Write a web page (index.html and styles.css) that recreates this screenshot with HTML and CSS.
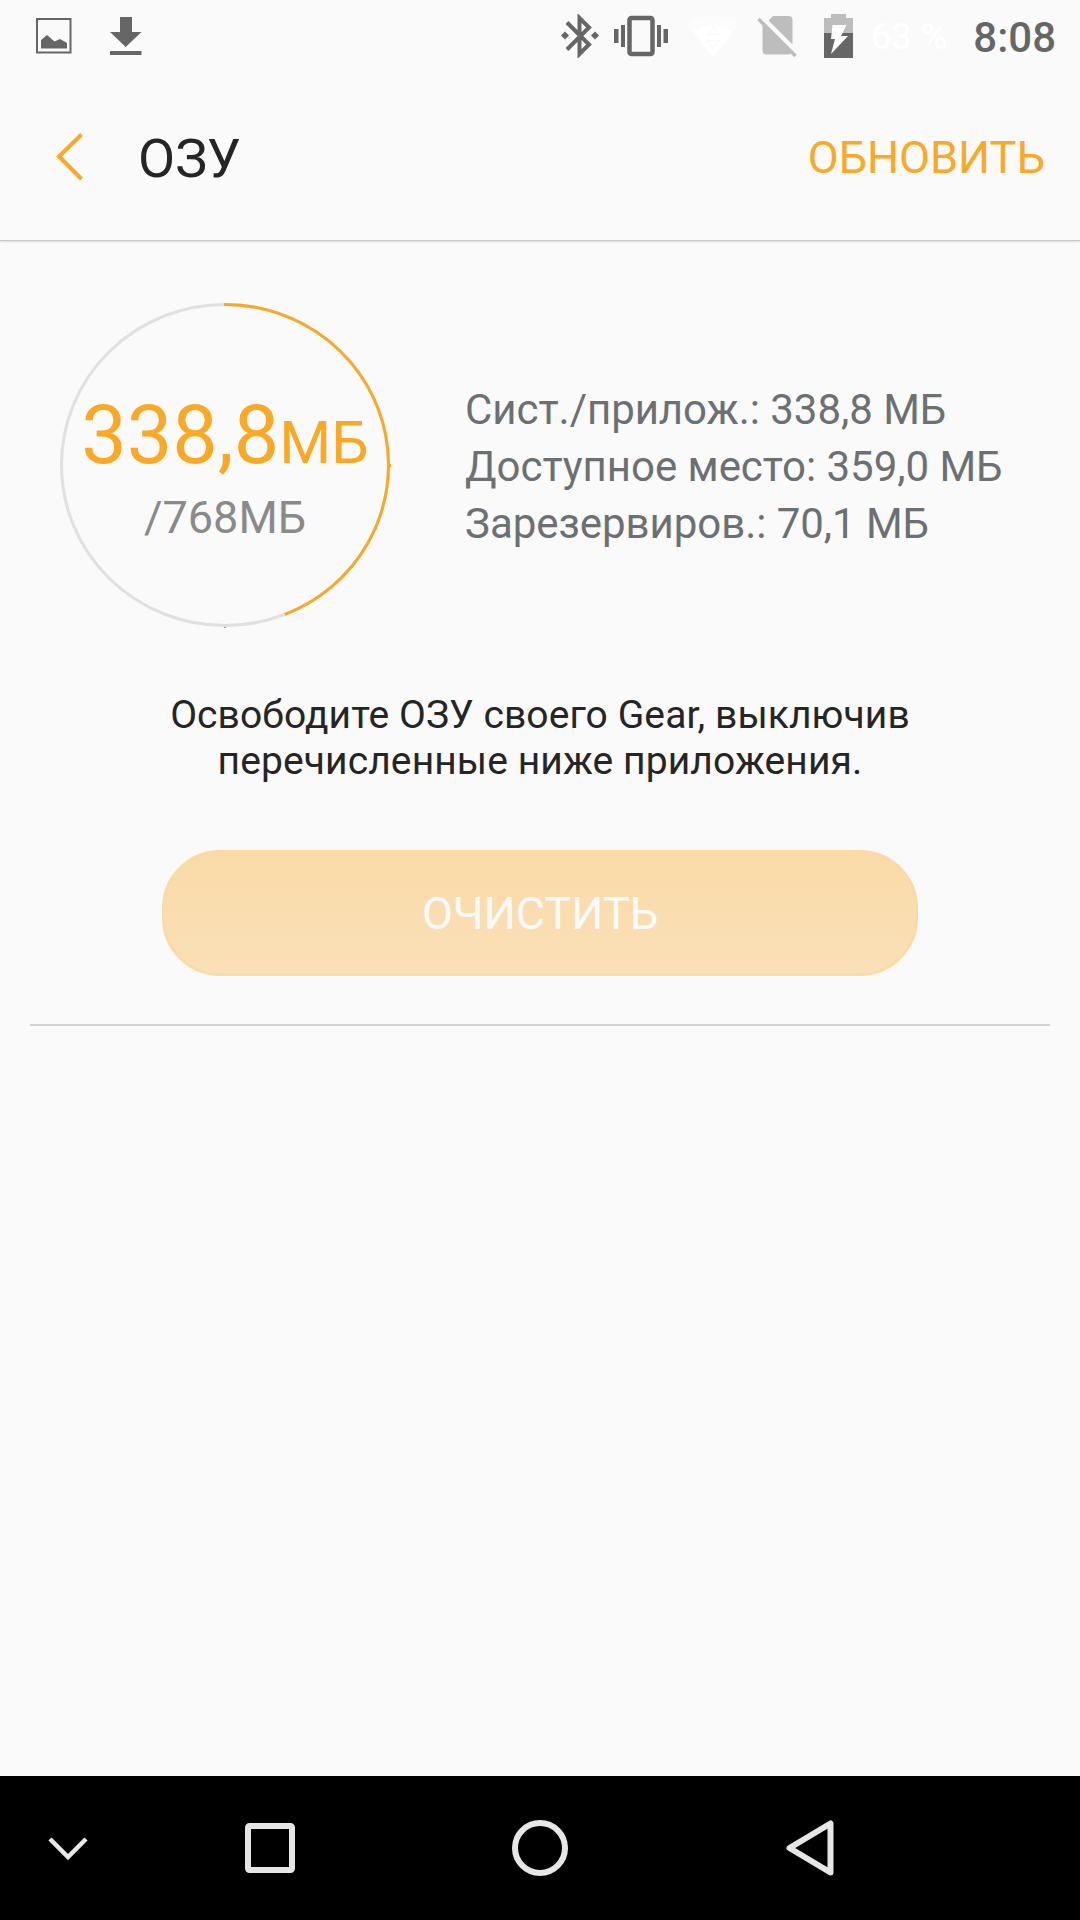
FILE: index.html
```
<!DOCTYPE html>
<html lang="ru">
<head>
    <meta charset="UTF-8">
    <meta name="viewport" content="width=device-width, initial-scale=1.0">
    <title>ОЗУ</title>
    <link rel="stylesheet" href="styles.css">
</head>
<body>
    <div class="screen">
        <div class="status-bar">
            <div class="status-left">
                <!-- screenshot -->
                <svg width="36" height="36" viewBox="0 0 36 36">
                    <rect x="1" y="1" width="33.5" height="33.5" fill="none" stroke="#666" stroke-width="2"/>
                    <path d="M5 30.500V22l6-5 7.500 6.500L24 21l7 4v5.500z" fill="#666"/>
                </svg>
                <!-- download -->
                <svg width="32" height="38" viewBox="0 0 32 38" fill="#666">
                    <path d="M10 0h12v15h9.500L15.700 30 0 15h10zM0 34h31.500v4H0z"/>
                </svg>
            </div>
            <div class="status-right">
                <!-- bluetooth -->
                <svg class="bt" width="39" height="44" viewBox="0 0 39 44">
                    <path d="M6 8.500L28 30.500 18.500 40V4L28 13.500 6 35.500" fill="none" stroke="#666" stroke-width="4"/>
                    <path d="M4 17.500l4 4-4 4-4-4zM34 17.500l4 4-4 4-4-4z" fill="#666"/>
                </svg>
                <!-- vibrate -->
                <svg class="vibrate" width="54" height="42" viewBox="0 0 54 42">
                    <rect x="15.500" y="3" width="23" height="36" rx="2" fill="none" stroke="#666" stroke-width="4.500"/>
                    <path d="M0 14h4.500v14H0zM7 10h4v22H7zM43 10h4v22h-4zM49.500 14H54v14h-4.500z" fill="#666"/>
                </svg>
                <!-- wifi -->
                <svg class="wifi" width="54" height="42" viewBox="0 0 54 42">
                    <path d="M0 9Q27-8 54 9L27 42z" fill="#fcfcfc"/>
                    <path d="M7 17Q27 4 47 17L27 42z" fill="#fff"/>
                    <path d="M27 11l5.500 8h-11zM27 34l-6-8.500h12z" fill="none" stroke="#fafafa" stroke-width="1.500"/>
                </svg>
                <!-- no sim -->
                <svg class="sim" width="40" height="43" viewBox="0 0 40 43">
                    <path d="M11.500 5.500L16 1h15.500q4 0 4 4v24.500zM5.500 9.500L34 38q-.5 1.500-3 1.500H9.500q-4 0-4-4z" fill="#bdbdbd"/>
                    <path d="M1.500 4L38.500 41" stroke="#bdbdbd" stroke-width="3.500"/>
                </svg>
                <!-- battery -->
                <svg class="battery" width="29" height="44" viewBox="0 0 29 44">
                    <path d="M0 19V4h7V0h15v4h7v15z" fill="#bdbdbd"/>
                    <path d="M0 19h29v25H0z" fill="#666"/>
                    <path d="M8.500 11h14l-5.500 11h7L7 40l4-15H7z" fill="#fff"/>
                </svg>
                <span class="percent">63 %</span>
                <span class="clock">8:08</span>
            </div>
        </div>

        <div class="header">
            <svg class="back" width="28" height="48" viewBox="0 0 28 48">
                <path d="M25.500 1.500L3 23.500 25.500 46" fill="none" stroke="#faa926" stroke-width="4"/>
            </svg>
            <h1>ОЗУ</h1>
            <button class="refresh">ОБНОВИТЬ</button>
        </div>

        <div class="content">
            <div class="memory">
                <div class="gauge">
                    <svg class="ring" width="332" height="326" viewBox="0 0 332 326">
                        <ellipse cx="165" cy="162" rx="163.500" ry="160.500" fill="none" stroke="#e0e0e0" stroke-width="3"/>
                        <path d="M164 1.500A163.500 160.500 0 0 1 225 311.300" fill="none" stroke="#faa926" stroke-width="3"/>
                        <path d="M329 161h2v3h-2z" fill="#faa926"/>
                        <path d="M164 324h2v1h-2z" fill="#999"/>
                    </svg>
                    <div class="used">338,8<span class="unit">МБ</span></div>
                    <div class="total">/768МБ</div>
                </div>
                <div class="details">
                    <div>Сист./прилож.: 338,8 МБ</div>
                    <div>Доступное место: 359,0 МБ</div>
                    <div>Зарезервиров.: 70,1 МБ</div>
                </div>
            </div>
            <p class="hint">Освободите ОЗУ своего Gear, выключив<br>перечисленные ниже приложения.</p>
            <button class="clean-btn">ОЧИСТИТЬ</button>
            <div class="divider"></div>
        </div>

        <div class="nav-bar">
            <svg width="40" height="24" viewBox="0 0 40 24">
                <path d="M2 3l18 18L38 3" fill="none" stroke="#e8e8e8" stroke-width="4.500"/>
            </svg>
            <svg width="50" height="50" viewBox="0 0 50 50">
                <rect x="3" y="3" width="44" height="44" rx="1.500" fill="none" stroke="#e6e6e6" stroke-width="6"/>
            </svg>
            <svg width="56" height="56" viewBox="0 0 56 56">
                <circle cx="28" cy="28" r="25" fill="none" stroke="#e6e6e6" stroke-width="6"/>
            </svg>
            <svg width="48" height="56" viewBox="0 0 48 56">
                <path d="M44.500 3.500v49L3.500 28z" fill="none" stroke="#e6e6e6" stroke-width="6" stroke-linejoin="round"/>
            </svg>
        </div>
    </div>
</body>
</html>
```
FILE: styles.css
```
* {
    box-sizing: border-box;
}

body {
    margin: 0;
    font-family: Roboto, sans-serif;
    background: #fafafa;
    color: #252525;
}

svg {
    display: block;
    flex: none;
}

button {
    font-family: inherit;
    border: none;
    background: none;
    padding: 0;
}

.screen {
    width: 1080px;
    height: 1920px;
    display: flex;
    flex-direction: column;
}

.status-bar {
    height: 72px;
    padding: 0 24px 0 36px;
    display: flex;
    justify-content: space-between;
    align-items: center;
}

.status-left {
    display: flex;
    align-items: center;
    gap: 38px;
}

.status-right {
    display: flex;
    align-items: center;
}

.vibrate {
    margin-left: 14px;
}

.wifi {
    margin-left: 18px;
}

.sim {
    margin-left: 17px;
}

.battery {
    margin-left: 27px;
}

.percent {
    margin-left: 18px;
    padding-top: 2px;
    width: 77px;
    font-size: 36px;
    color: #fff;
    white-space: nowrap;
}

.clock {
    margin-left: 25px;
    padding-top: 2px;
    font-size: 42px;
    font-weight: 500;
    color: #666;
}

.header {
    height: 169px;
    padding: 2px 35px 0 56px;
    border-bottom: 1px solid #c8c8c8;
    box-shadow: 0 1px 2px rgba(0, 0, 0, 0.12);
    display: flex;
    align-items: center;
}

.header h1 {
    margin: 2px 0 0 54px;
    font-size: 54px;
    font-weight: 400;
}

.refresh {
    margin-left: auto;
    font-size: 45px;
    color: #faa926;
}

.content {
    flex: 1;
    padding: 62px 30px 0;
    display: flex;
    flex-direction: column;
    align-items: center;
}

.memory {
    width: 100%;
    padding-left: 30px;
    display: flex;
    align-items: center;
}

.gauge {
    position: relative;
    width: 330px;
    height: 324px;
    display: flex;
    flex-direction: column;
    align-items: center;
}

.ring {
    position: absolute;
    top: 0;
    left: 0;
}

.used {
    margin-top: 85px;
    font-size: 81px;
    line-height: 96px;
    color: #faa926;
    white-space: nowrap;
}

.unit {
    font-size: 59.5px;
}

.total {
    font-size: 45px;
    line-height: 54px;
    color: #8a8a8a;
}

.details {
    margin-left: 75px;
    padding-top: 2px;
    font-size: 42px;
    line-height: 57px;
    letter-spacing: -0.04px;
    color: #6c7073;
    white-space: nowrap;
}

.hint {
    margin: 65px 0 0;
    font-size: 39px;
    line-height: 46px;
    letter-spacing: 0.1px;
    text-align: center;
}

.clean-btn {
    width: 756px;
    height: 126px;
    margin-top: 66px;
    border: 3px solid #fadba8;
    border-radius: 58px;
    background: linear-gradient(#fadba8, #fae0b8);
    font-size: 45px;
    color: #fafafa;
}

.divider {
    width: 100%;
    height: 2px;
    margin-top: 48px;
    background: #d2d2d2;
}

.nav-bar {
    height: 144px;
    padding: 0 246px 0 48px;
    background: #000;
    display: flex;
    align-items: center;
}

.nav-bar svg:nth-child(2) {
    margin-left: 157px;
}

.nav-bar svg:nth-child(3) {
    margin-left: 217px;
}

.nav-bar svg:nth-child(4) {
    margin-left: 218px;
}
```
